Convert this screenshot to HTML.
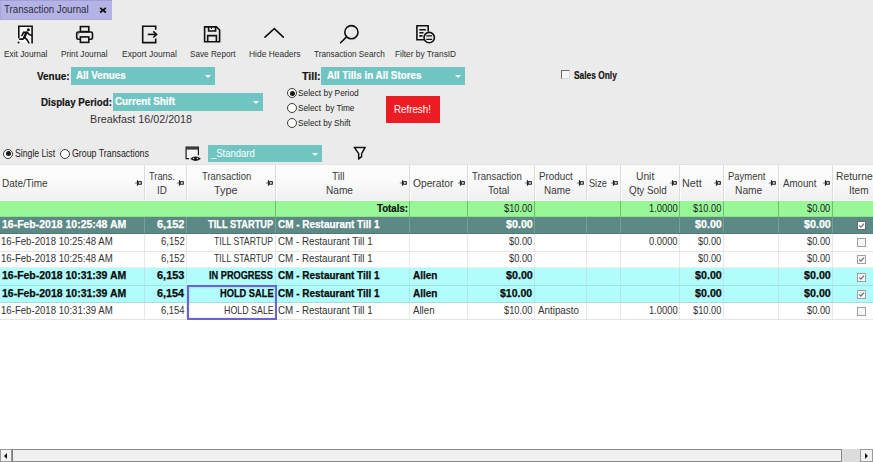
<!DOCTYPE html><html><head><meta charset="utf-8"><title>Transaction Journal</title><style>
*{margin:0;padding:0;box-sizing:border-box}
html,body{width:873px;height:462px;overflow:hidden;background:#ebebeb;font-family:"Liberation Sans",sans-serif}
.a{position:absolute}
.t{position:absolute;white-space:nowrap;transform-origin:0 0}
.dd{position:absolute;background:#70c4c2}
.arr{position:absolute;width:0;height:0;border-left:3px solid transparent;border-right:3px solid transparent;border-top:3px solid #fff}
.radio{position:absolute;width:10px;height:10px;border:1px solid #3c3c3c;border-radius:50%;background:#fafafa}
.radio.on::after{content:"";position:absolute;left:1.5px;top:1.5px;width:5px;height:5px;border-radius:50%;background:#1a1a1a}
.vl{position:absolute;width:1px}
.hl{position:absolute;height:1px;left:0;width:873px}
.cb{position:absolute;width:9px;height:9px;border:1px solid #6e6e6e;background:#fff}
</style></head><body>
<div class="a" style="left:0;top:0;width:112px;height:20px;background:#b5b3e5;border-top:1px solid #a09dd8;border-left:1px solid #a8a6dc"></div>
<div class="a" style="left:0;top:19px;width:112px;height:1px;background:#aba8de"></div>
<div class="t" style="left:4.09px;top:0px;font-size:10.0px;line-height:20px;font-weight:normal;color:#2a2a3c;transform:scaleX(0.9670);">Transaction Journal</div>
<svg class="a" style="left:98px;top:5px" width="10" height="10" viewBox="0 0 10 10"><path d="M2.1 2.9L7.9 7.5M7.9 2.9L2.1 7.5" stroke="#111" stroke-width="1.8"/></svg>
<svg class="a" style="left:14px;top:22px" width="24" height="24" viewBox="14 22 24 24" fill="none" stroke="#111" stroke-width="1.6" stroke-linecap="round">
<rect x="19" y="26.5" width="12.6" height="16" fill="#f6f6f6" stroke="none"/>
<path d="M18.8 37.5V26.2H32.1V43"/><circle cx="28.4" cy="29.8" r="1.5" fill="#111" stroke="none"/>
<path d="M21.9 35.6L23.6 32.4H27.2L29.4 34.6L31.4 35.2"/><path d="M26.4 32.6L24.2 37.4" stroke-width="2.3"/><path d="M24.6 37.3L22.9 39.1H19.6"/><path d="M24.6 37.3L26.9 39.6L28.9 42.9"/><circle cx="18.6" cy="42.5" r="1" fill="#111" stroke="none"/></svg>
<svg class="a" style="left:72px;top:22px" width="24" height="24" viewBox="72 22 24 24" fill="none" stroke="#111" stroke-width="1.6">
<rect x="80.4" y="26.6" width="8.4" height="5"/><path d="M80.4 39.3H78.3A1.6 1.6 0 0 1 76.7 37.7V33.6A1.6 1.6 0 0 1 78.3 32H90.9A1.6 1.6 0 0 1 92.5 33.6V37.7A1.6 1.6 0 0 1 90.9 39.3H88.8"/><rect x="80.4" y="36.9" width="8.4" height="5.5"/><circle cx="78.6" cy="33.6" r="0.6" fill="#555" stroke="none"/></svg>
<svg class="a" style="left:138px;top:22px" width="24" height="24" viewBox="138 22 24 24" fill="none" stroke="#111" stroke-width="1.6">
<path d="M155.7 29.8V26.3H142.7V42.6H155.7V38.6"/><path d="M147.8 34.4H156.6"/><path d="M153.3 31.3L156.6 34.4L153.3 37.5"/></svg>
<svg class="a" style="left:199px;top:22px" width="24" height="24" viewBox="199 22 24 24" fill="none" stroke="#111" stroke-width="1.6">
<path d="M204.6 26.9H216.5L219.6 30V41.8H204.6Z"/><path d="M208.6 26.9V31H215.6V26.9"/><path d="M207.7 41.8V35.6H216.4V41.8"/><path d="M211.5 27.5V29" stroke-width="1"/></svg>
<svg class="a" style="left:261px;top:22px" width="26" height="24" viewBox="261 22 26 24" fill="none" stroke="#111" stroke-width="1.6" stroke-linecap="round">
<path d="M265 37.2L274.3 28.6L283.3 37.2"/></svg>
<svg class="a" style="left:337px;top:22px" width="26" height="24" viewBox="337 22 26 24" fill="none" stroke="#111" stroke-width="1.6" stroke-linecap="round">
<circle cx="351.4" cy="32.2" r="6.6"/><path d="M340.6 42.8L346 37.4"/></svg>
<svg class="a" style="left:412px;top:22px" width="26" height="24" viewBox="412 22 26 24" fill="none" stroke="#111" stroke-width="1.6">
<path d="M424 39.8H416.9V25.8H428.2V31.5"/><path d="M419.3 29.8H425.8M419.3 32.8H423.5M419.3 35.9H422.5"/><circle cx="429.2" cy="37.6" r="5.2" fill="#ebebeb"/><path d="M426.3 35.8H432.1M426.3 39.4H432.1" stroke-width="1.3"/></svg>
<div class="t" style="left:4.12px;top:44px;font-size:8.6px;line-height:20px;font-weight:normal;color:#2e2e2e;transform:scaleX(0.9669);">Exit Journal</div>
<div class="t" style="left:61.22px;top:44px;font-size:8.6px;line-height:20px;font-weight:normal;color:#2e2e2e;transform:scaleX(0.9639);">Print Journal</div>
<div class="t" style="left:121.90px;top:44px;font-size:8.6px;line-height:20px;font-weight:normal;color:#2e2e2e;transform:scaleX(0.9895);">Export Journal</div>
<div class="t" style="left:189.52px;top:44px;font-size:8.6px;line-height:20px;font-weight:normal;color:#2e2e2e;transform:scaleX(0.9524);">Save Report</div>
<div class="t" style="left:248.91px;top:44px;font-size:8.6px;line-height:20px;font-weight:normal;color:#2e2e2e;transform:scaleX(0.9813);">Hide Headers</div>
<div class="t" style="left:314.02px;top:44px;font-size:8.6px;line-height:20px;font-weight:normal;color:#2e2e2e;transform:scaleX(0.9550);">Transaction Search</div>
<div class="t" style="left:395.32px;top:44px;font-size:8.6px;line-height:20px;font-weight:normal;color:#2e2e2e;transform:scaleX(0.9699);">Filter by TransID</div>
<div class="t" style="left:36.83px;top:66px;font-size:10.6px;line-height:20px;font-weight:bold;color:#141414;transform:scaleX(0.9357);-webkit-text-stroke:0.2px currentColor;">Venue:</div>
<div class="dd" style="left:71px;top:67px;width:144px;height:18px"></div>
<div class="t" style="left:76.35px;top:65px;font-size:10.8px;line-height:20px;font-weight:bold;color:#fff;transform:scaleX(0.9109);-webkit-text-stroke:0.2px currentColor;">All Venues</div>
<div class="arr" style="left:205px;top:74.5px"></div>
<div class="t" style="left:302.38px;top:66px;font-size:10.6px;line-height:20px;font-weight:bold;color:#141414;transform:scaleX(0.9994);-webkit-text-stroke:0.2px currentColor;">Till:</div>
<div class="dd" style="left:321px;top:67px;width:144px;height:18px"></div>
<div class="t" style="left:326.75px;top:65px;font-size:10.8px;line-height:20px;font-weight:bold;color:#fff;transform:scaleX(0.9097);-webkit-text-stroke:0.2px currentColor;">All Tills in All Stores</div>
<div class="arr" style="left:455px;top:74.5px"></div>
<div class="a" style="left:561px;top:70px;width:9px;height:9px;background:#f6f6f6;border-top:1px solid #6a6a6a;border-left:1px solid #6a6a6a;border-right:1px solid #dadada;border-bottom:1px solid #dadada"></div>
<div class="t" style="left:574.36px;top:66px;font-size:10.0px;line-height:20px;font-weight:bold;color:#141414;transform:scaleX(0.8366);-webkit-text-stroke:0.2px currentColor;">Sales Only</div>
<div class="t" style="left:41.05px;top:92px;font-size:10.6px;line-height:20px;font-weight:bold;color:#141414;transform:scaleX(0.9199);-webkit-text-stroke:0.2px currentColor;">Display Period:</div>
<div class="dd" style="left:113px;top:93px;width:150px;height:18px"></div>
<div class="t" style="left:115.10px;top:91px;font-size:10.6px;line-height:20px;font-weight:bold;color:#fff;transform:scaleX(0.9266);-webkit-text-stroke:0.2px currentColor;">Current Shift</div>
<div class="arr" style="left:253px;top:100.5px"></div>
<div class="t" style="left:90.32px;top:110px;font-size:10.2px;line-height:20px;font-weight:normal;color:#333;transform:scaleX(1.0533);">Breakfast 16/02/2018</div>
<div class="radio on" style="left:287px;top:88px"></div>
<div class="t" style="left:298.12px;top:83px;font-size:8.5px;line-height:20px;font-weight:normal;color:#222;transform:scaleX(0.9809);">Select by Period</div>
<div class="radio" style="left:287px;top:103px"></div>
<div class="t" style="left:298.12px;top:98px;font-size:8.5px;line-height:20px;font-weight:normal;color:#222;transform:scaleX(0.9714);">Select&nbsp; by Time</div>
<div class="radio" style="left:287px;top:118px"></div>
<div class="t" style="left:298.12px;top:113px;font-size:8.5px;line-height:20px;font-weight:normal;color:#222;transform:scaleX(0.9669);">Select by Shift</div>
<div class="a" style="left:386px;top:96px;width:54px;height:27px;background:#ec1c24"></div>
<div class="t" style="left:394.20px;top:100px;font-size:10.0px;line-height:20px;font-weight:normal;color:#fff;transform:scaleX(0.9762);">Refresh!</div>
<div class="radio on" style="left:3px;top:148.5px"></div>
<div class="t" style="left:14.60px;top:144px;font-size:10.0px;line-height:20px;font-weight:normal;color:#222;transform:scaleX(0.8682);">Single List</div>
<div class="radio" style="left:60px;top:148.5px"></div>
<div class="t" style="left:71.56px;top:144px;font-size:10.0px;line-height:20px;font-weight:normal;color:#222;transform:scaleX(0.8807);">Group Transactions</div>
<svg class="a" style="left:182px;top:142px" width="24" height="24" viewBox="182 142 24 24" fill="none" stroke="#1a1a1a" stroke-width="1.2">
<rect x="186.2" y="147" width="12.2" height="11.6" fill="#f7f7f7" stroke="none"/>
<path d="M189 158.6H186.1V147.1H198.4V155.2"/><rect x="186.1" y="147" width="12.3" height="2.6" fill="#3a3a3a" stroke="none"/>
<path d="M190.8 158.7Q195.5 155.2 200.3 158.7Q195.5 162.2 190.8 158.7Z" fill="#111" stroke="#111" stroke-width="0.9"/><circle cx="193.6" cy="158.5" r="0.75" fill="#ddd" stroke="none"/><circle cx="197.4" cy="158.5" r="0.75" fill="#ddd" stroke="none"/></svg>
<div class="dd" style="left:208px;top:145px;width:114px;height:17px"></div>
<div class="t" style="left:210.54px;top:144px;font-size:10.0px;line-height:20px;font-weight:normal;color:#fff;transform:scaleX(0.9461);">_Standard</div>
<div class="arr" style="left:312px;top:152.5px"></div>
<svg class="a" style="left:348px;top:142px" width="24" height="24" viewBox="348 142 24 24" fill="none" stroke="#111" stroke-width="1.5" stroke-linejoin="round">
<path d="M354.3 147.4H365.2L361.6 153.6V156.6L358.7 159V153.6Z" fill="#f5f5f5"/></svg>
<div class="a" style="left:0;top:164px;width:873px;height:285px;background:#fff"></div>
<div class="a" style="left:0;top:164px;width:873px;height:37px;background:linear-gradient(#fcfcfc,#fbfbfb 40%,#f0f0f0);border-top:1px solid #e2e2e2;border-bottom:1px solid #f7f2f7"></div>
<div class="vl" style="left:144px;top:165px;height:35px;background:#dcdcdc"></div>
<div class="vl" style="left:145px;top:165px;height:35px;background:#fdfdfd"></div>
<div class="vl" style="left:186px;top:165px;height:35px;background:#dcdcdc"></div>
<div class="vl" style="left:187px;top:165px;height:35px;background:#fdfdfd"></div>
<div class="vl" style="left:275px;top:165px;height:35px;background:#dcdcdc"></div>
<div class="vl" style="left:276px;top:165px;height:35px;background:#fdfdfd"></div>
<div class="vl" style="left:409px;top:165px;height:35px;background:#dcdcdc"></div>
<div class="vl" style="left:410px;top:165px;height:35px;background:#fdfdfd"></div>
<div class="vl" style="left:467px;top:165px;height:35px;background:#dcdcdc"></div>
<div class="vl" style="left:468px;top:165px;height:35px;background:#fdfdfd"></div>
<div class="vl" style="left:534px;top:165px;height:35px;background:#dcdcdc"></div>
<div class="vl" style="left:535px;top:165px;height:35px;background:#fdfdfd"></div>
<div class="vl" style="left:586px;top:165px;height:35px;background:#dcdcdc"></div>
<div class="vl" style="left:587px;top:165px;height:35px;background:#fdfdfd"></div>
<div class="vl" style="left:620px;top:165px;height:35px;background:#dcdcdc"></div>
<div class="vl" style="left:621px;top:165px;height:35px;background:#fdfdfd"></div>
<div class="vl" style="left:679px;top:165px;height:35px;background:#dcdcdc"></div>
<div class="vl" style="left:680px;top:165px;height:35px;background:#fdfdfd"></div>
<div class="vl" style="left:723px;top:165px;height:35px;background:#dcdcdc"></div>
<div class="vl" style="left:724px;top:165px;height:35px;background:#fdfdfd"></div>
<div class="vl" style="left:778px;top:165px;height:35px;background:#dcdcdc"></div>
<div class="vl" style="left:779px;top:165px;height:35px;background:#fdfdfd"></div>
<div class="vl" style="left:832px;top:165px;height:35px;background:#dcdcdc"></div>
<div class="vl" style="left:833px;top:165px;height:35px;background:#fdfdfd"></div>
<div class="t" style="left:1.58px;top:174px;font-size:10.4px;line-height:20px;font-weight:normal;color:#3a3a3a;transform:scaleX(0.9596);">Date/Time</div>
<div class="t" style="left:412.52px;top:174px;font-size:10.4px;line-height:20px;font-weight:normal;color:#3a3a3a;transform:scaleX(0.9858);">Operator</div>
<div class="t" style="left:589.18px;top:174px;font-size:10.4px;line-height:20px;font-weight:normal;color:#3a3a3a;transform:scaleX(0.8812);">Size</div>
<div class="t" style="left:682.12px;top:174px;font-size:10.4px;line-height:20px;font-weight:normal;color:#3a3a3a;transform:scaleX(1.0359);">Nett</div>
<div class="t" style="left:782.68px;top:174px;font-size:10.4px;line-height:20px;font-weight:normal;color:#3a3a3a;transform:scaleX(0.9316);">Amount</div>
<div class="t" style="left:148.60px;top:167px;font-size:10.4px;line-height:20px;font-weight:normal;color:#3a3a3a;transform:scaleX(0.8920);">Trans.</div>
<div class="t" style="left:157.30px;top:181px;font-size:10.4px;line-height:20px;font-weight:normal;color:#3a3a3a;transform:scaleX(0.9392);">ID</div>
<div class="t" style="left:201.99px;top:167px;font-size:10.4px;line-height:20px;font-weight:normal;color:#3a3a3a;transform:scaleX(0.9125);">Transaction</div>
<div class="t" style="left:214.26px;top:181px;font-size:10.4px;line-height:20px;font-weight:normal;color:#3a3a3a;transform:scaleX(1.0521);">Type</div>
<div class="t" style="left:331.98px;top:167px;font-size:10.4px;line-height:20px;font-weight:normal;color:#3a3a3a;transform:scaleX(0.9691);">Till</div>
<div class="t" style="left:326.07px;top:181px;font-size:10.4px;line-height:20px;font-weight:normal;color:#3a3a3a;transform:scaleX(0.9725);">Name</div>
<div class="t" style="left:472.49px;top:167px;font-size:10.4px;line-height:20px;font-weight:normal;color:#3a3a3a;transform:scaleX(0.9238);">Transaction</div>
<div class="t" style="left:487.78px;top:181px;font-size:10.4px;line-height:20px;font-weight:normal;color:#3a3a3a;transform:scaleX(0.9696);">Total</div>
<div class="t" style="left:539.19px;top:167px;font-size:10.4px;line-height:20px;font-weight:normal;color:#3a3a3a;transform:scaleX(0.9452);">Product</div>
<div class="t" style="left:544.18px;top:181px;font-size:10.4px;line-height:20px;font-weight:normal;color:#3a3a3a;transform:scaleX(0.9574);">Name</div>
<div class="t" style="left:636.41px;top:167px;font-size:10.4px;line-height:20px;font-weight:normal;color:#3a3a3a;transform:scaleX(0.9871);">Unit</div>
<div class="t" style="left:628.54px;top:181px;font-size:10.4px;line-height:20px;font-weight:normal;color:#3a3a3a;transform:scaleX(0.9450);">Qty Sold</div>
<div class="t" style="left:727.92px;top:167px;font-size:10.4px;line-height:20px;font-weight:normal;color:#3a3a3a;transform:scaleX(0.9099);">Payment</div>
<div class="t" style="left:734.96px;top:181px;font-size:10.4px;line-height:20px;font-weight:normal;color:#3a3a3a;transform:scaleX(0.9839);">Name</div>
<div class="t" style="left:836.25px;top:167px;font-size:10.4px;line-height:20px;font-weight:normal;color:#3a3a3a;transform:scaleX(0.9911);">Returned</div>
<div class="t" style="left:848.67px;top:181px;font-size:10.4px;line-height:20px;font-weight:normal;color:#3a3a3a;transform:scaleX(0.9739);">Item</div>
<svg class="a" style="left:134px;top:174px" width="10" height="14" viewBox="0 0 10 14"><path d="M0.8 9H3" stroke="#8a8a8a" stroke-width="1.1"/><path d="M3.4 6.2V11.7" stroke="#111" stroke-width="1"/><rect x="4.2" y="7.7" width="3.1" height="2.5" fill="#fff" stroke="#111" stroke-width="1"/></svg>
<svg class="a" style="left:176px;top:174px" width="10" height="14" viewBox="0 0 10 14"><path d="M0.8 9H3" stroke="#8a8a8a" stroke-width="1.1"/><path d="M3.4 6.2V11.7" stroke="#111" stroke-width="1"/><rect x="4.2" y="7.7" width="3.1" height="2.5" fill="#fff" stroke="#111" stroke-width="1"/></svg>
<svg class="a" style="left:265px;top:174px" width="10" height="14" viewBox="0 0 10 14"><path d="M0.8 9H3" stroke="#8a8a8a" stroke-width="1.1"/><path d="M3.4 6.2V11.7" stroke="#111" stroke-width="1"/><rect x="4.2" y="7.7" width="3.1" height="2.5" fill="#fff" stroke="#111" stroke-width="1"/></svg>
<svg class="a" style="left:399px;top:174px" width="10" height="14" viewBox="0 0 10 14"><path d="M0.8 9H3" stroke="#8a8a8a" stroke-width="1.1"/><path d="M3.4 6.2V11.7" stroke="#111" stroke-width="1"/><rect x="4.2" y="7.7" width="3.1" height="2.5" fill="#fff" stroke="#111" stroke-width="1"/></svg>
<svg class="a" style="left:457px;top:174px" width="10" height="14" viewBox="0 0 10 14"><path d="M0.8 9H3" stroke="#8a8a8a" stroke-width="1.1"/><path d="M3.4 6.2V11.7" stroke="#111" stroke-width="1"/><rect x="4.2" y="7.7" width="3.1" height="2.5" fill="#fff" stroke="#111" stroke-width="1"/></svg>
<svg class="a" style="left:524px;top:174px" width="10" height="14" viewBox="0 0 10 14"><path d="M0.8 9H3" stroke="#8a8a8a" stroke-width="1.1"/><path d="M3.4 6.2V11.7" stroke="#111" stroke-width="1"/><rect x="4.2" y="7.7" width="3.1" height="2.5" fill="#fff" stroke="#111" stroke-width="1"/></svg>
<svg class="a" style="left:576px;top:174px" width="10" height="14" viewBox="0 0 10 14"><path d="M0.8 9H3" stroke="#8a8a8a" stroke-width="1.1"/><path d="M3.4 6.2V11.7" stroke="#111" stroke-width="1"/><rect x="4.2" y="7.7" width="3.1" height="2.5" fill="#fff" stroke="#111" stroke-width="1"/></svg>
<svg class="a" style="left:610px;top:174px" width="10" height="14" viewBox="0 0 10 14"><path d="M0.8 9H3" stroke="#8a8a8a" stroke-width="1.1"/><path d="M3.4 6.2V11.7" stroke="#111" stroke-width="1"/><rect x="4.2" y="7.7" width="3.1" height="2.5" fill="#fff" stroke="#111" stroke-width="1"/></svg>
<svg class="a" style="left:669px;top:174px" width="10" height="14" viewBox="0 0 10 14"><path d="M0.8 9H3" stroke="#8a8a8a" stroke-width="1.1"/><path d="M3.4 6.2V11.7" stroke="#111" stroke-width="1"/><rect x="4.2" y="7.7" width="3.1" height="2.5" fill="#fff" stroke="#111" stroke-width="1"/></svg>
<svg class="a" style="left:713px;top:174px" width="10" height="14" viewBox="0 0 10 14"><path d="M0.8 9H3" stroke="#8a8a8a" stroke-width="1.1"/><path d="M3.4 6.2V11.7" stroke="#111" stroke-width="1"/><rect x="4.2" y="7.7" width="3.1" height="2.5" fill="#fff" stroke="#111" stroke-width="1"/></svg>
<svg class="a" style="left:768px;top:174px" width="10" height="14" viewBox="0 0 10 14"><path d="M0.8 9H3" stroke="#8a8a8a" stroke-width="1.1"/><path d="M3.4 6.2V11.7" stroke="#111" stroke-width="1"/><rect x="4.2" y="7.7" width="3.1" height="2.5" fill="#fff" stroke="#111" stroke-width="1"/></svg>
<svg class="a" style="left:822px;top:174px" width="10" height="14" viewBox="0 0 10 14"><path d="M0.8 9H3" stroke="#8a8a8a" stroke-width="1.1"/><path d="M3.4 6.2V11.7" stroke="#111" stroke-width="1"/><rect x="4.2" y="7.7" width="3.1" height="2.5" fill="#fff" stroke="#111" stroke-width="1"/></svg>
<div class="a" style="left:0;top:201px;width:873px;height:16px;background:#98f898"></div>
<div class="a" style="left:0;top:216px;width:873px;height:1px;background:#8fe08f"></div>
<div class="vl" style="left:275px;top:201px;height:16px;background:#6fbf6f"></div>
<div class="vl" style="left:409px;top:201px;height:16px;background:#6fbf6f"></div>
<div class="vl" style="left:467px;top:201px;height:16px;background:#6fbf6f"></div>
<div class="vl" style="left:534px;top:201px;height:16px;background:#6fbf6f"></div>
<div class="vl" style="left:620px;top:201px;height:16px;background:#6fbf6f"></div>
<div class="vl" style="left:679px;top:201px;height:16px;background:#6fbf6f"></div>
<div class="vl" style="left:723px;top:201px;height:16px;background:#6fbf6f"></div>
<div class="vl" style="left:778px;top:201px;height:16px;background:#6fbf6f"></div>
<div class="vl" style="left:832px;top:201px;height:16px;background:#6fbf6f"></div>
<div class="t" style="left:376.89px;top:198px;font-size:10.5px;line-height:20px;font-weight:bold;color:#111;transform:scaleX(0.9226);-webkit-text-stroke:0.2px currentColor;">Totals:</div>
<div class="t" style="left:504.10px;top:198px;font-size:10.5px;line-height:20px;font-weight:normal;color:#222;transform:scaleX(0.8802);">$10.00</div>
<div class="t" style="left:648.58px;top:198px;font-size:10.5px;line-height:20px;font-weight:normal;color:#222;transform:scaleX(0.8964);">1.0000</div>
<div class="t" style="left:693.10px;top:198px;font-size:10.5px;line-height:20px;font-weight:normal;color:#222;transform:scaleX(0.8802);">$10.00</div>
<div class="t" style="left:807.10px;top:198px;font-size:10.5px;line-height:20px;font-weight:normal;color:#222;transform:scaleX(0.8856);">$0.00</div>
<div class="a" style="left:0;top:217px;width:873px;height:17px;background:#5c8986"></div>
<div class="vl" style="left:144px;top:217px;height:17px;background:#779f9c"></div>
<div class="vl" style="left:186px;top:217px;height:17px;background:#779f9c"></div>
<div class="vl" style="left:275px;top:217px;height:17px;background:#779f9c"></div>
<div class="vl" style="left:409px;top:217px;height:17px;background:#779f9c"></div>
<div class="vl" style="left:467px;top:217px;height:17px;background:#779f9c"></div>
<div class="vl" style="left:534px;top:217px;height:17px;background:#779f9c"></div>
<div class="vl" style="left:586px;top:217px;height:17px;background:#779f9c"></div>
<div class="vl" style="left:620px;top:217px;height:17px;background:#779f9c"></div>
<div class="vl" style="left:679px;top:217px;height:17px;background:#779f9c"></div>
<div class="vl" style="left:723px;top:217px;height:17px;background:#779f9c"></div>
<div class="vl" style="left:778px;top:217px;height:17px;background:#779f9c"></div>
<div class="vl" style="left:832px;top:217px;height:17px;background:#779f9c"></div>
<div class="t" style="left:1.54px;top:214px;font-size:10.5px;line-height:20px;font-weight:bold;color:#fff;transform:scaleX(0.9980);-webkit-text-stroke:0.25px currentColor;">16-Feb-2018 10:25:48 AM</div>
<div class="t" style="left:156.99px;top:214px;font-size:10.5px;line-height:20px;font-weight:bold;color:#fff;transform:scaleX(1.0447);-webkit-text-stroke:0.25px currentColor;">6,152</div>
<div class="t" style="left:208.10px;top:214px;font-size:10.5px;line-height:20px;font-weight:bold;color:#fff;transform:scaleX(0.8850);-webkit-text-stroke:0.25px currentColor;">TILL STARTUP</div>
<div class="t" style="left:278.39px;top:214px;font-size:10.5px;line-height:20px;font-weight:bold;color:#fff;transform:scaleX(0.9481);-webkit-text-stroke:0.25px currentColor;">CM - Restaurant Till 1</div>
<div class="t" style="left:505.66px;top:214px;font-size:10.5px;line-height:20px;font-weight:bold;color:#fff;transform:scaleX(1.0193);-webkit-text-stroke:0.25px currentColor;">$0.00</div>
<div class="t" style="left:694.66px;top:214px;font-size:10.5px;line-height:20px;font-weight:bold;color:#fff;transform:scaleX(1.0193);-webkit-text-stroke:0.25px currentColor;">$0.00</div>
<div class="t" style="left:803.66px;top:214px;font-size:10.5px;line-height:20px;font-weight:bold;color:#fff;transform:scaleX(1.0193);-webkit-text-stroke:0.25px currentColor;">$0.00</div>
<div class="cb" style="left:857px;top:221px;border-color:#6a6a6a;background:#fff"><svg width="7" height="7" viewBox="0 0 7 7" style="position:absolute;left:0;top:0"><path d="M1.2 3.4L2.9 5.1L6 1.6" fill="none" stroke="#707070" stroke-width="1.3"/></svg></div>
<div class="a" style="left:0;top:234px;width:873px;height:17px;background:#ffffff"></div>
<div class="vl" style="left:144px;top:234px;height:17px;background:#e8e8e8"></div>
<div class="vl" style="left:186px;top:234px;height:17px;background:#e8e8e8"></div>
<div class="vl" style="left:275px;top:234px;height:17px;background:#e8e8e8"></div>
<div class="vl" style="left:409px;top:234px;height:17px;background:#e8e8e8"></div>
<div class="vl" style="left:467px;top:234px;height:17px;background:#e8e8e8"></div>
<div class="vl" style="left:534px;top:234px;height:17px;background:#e8e8e8"></div>
<div class="vl" style="left:586px;top:234px;height:17px;background:#e8e8e8"></div>
<div class="vl" style="left:620px;top:234px;height:17px;background:#e8e8e8"></div>
<div class="vl" style="left:679px;top:234px;height:17px;background:#e8e8e8"></div>
<div class="vl" style="left:723px;top:234px;height:17px;background:#e8e8e8"></div>
<div class="vl" style="left:778px;top:234px;height:17px;background:#e8e8e8"></div>
<div class="vl" style="left:832px;top:234px;height:17px;background:#e8e8e8"></div>
<div class="t" style="left:1.47px;top:231px;font-size:10.5px;line-height:20px;font-weight:normal;color:#333;transform:scaleX(0.9157);">16-Feb-2018 10:25:48 AM</div>
<div class="t" style="left:160.72px;top:231px;font-size:10.5px;line-height:20px;font-weight:normal;color:#333;transform:scaleX(0.9044);">6,152</div>
<div class="t" style="left:214.41px;top:231px;font-size:10.5px;line-height:20px;font-weight:normal;color:#333;transform:scaleX(0.8251);">TILL STARTUP</div>
<div class="t" style="left:278.30px;top:231px;font-size:10.5px;line-height:20px;font-weight:normal;color:#333;transform:scaleX(0.9316);">CM - Restaurant Till 1</div>
<div class="t" style="left:509.10px;top:231px;font-size:10.5px;line-height:20px;font-weight:normal;color:#333;transform:scaleX(0.8856);">$0.00</div>
<div class="t" style="left:648.84px;top:231px;font-size:10.5px;line-height:20px;font-weight:normal;color:#333;transform:scaleX(0.8885);">0.0000</div>
<div class="t" style="left:698.10px;top:231px;font-size:10.5px;line-height:20px;font-weight:normal;color:#333;transform:scaleX(0.8856);">$0.00</div>
<div class="t" style="left:807.10px;top:231px;font-size:10.5px;line-height:20px;font-weight:normal;color:#333;transform:scaleX(0.8856);">$0.00</div>
<div class="cb" style="left:857px;top:238px;border-color:#a0a0a0;background:#f7f7f7"></div>
<div class="a" style="left:0;top:251px;width:873px;height:17px;background:#ffffff"></div>
<div class="vl" style="left:144px;top:251px;height:17px;background:#e8e8e8"></div>
<div class="vl" style="left:186px;top:251px;height:17px;background:#e8e8e8"></div>
<div class="vl" style="left:275px;top:251px;height:17px;background:#e8e8e8"></div>
<div class="vl" style="left:409px;top:251px;height:17px;background:#e8e8e8"></div>
<div class="vl" style="left:467px;top:251px;height:17px;background:#e8e8e8"></div>
<div class="vl" style="left:534px;top:251px;height:17px;background:#e8e8e8"></div>
<div class="vl" style="left:586px;top:251px;height:17px;background:#e8e8e8"></div>
<div class="vl" style="left:620px;top:251px;height:17px;background:#e8e8e8"></div>
<div class="vl" style="left:679px;top:251px;height:17px;background:#e8e8e8"></div>
<div class="vl" style="left:723px;top:251px;height:17px;background:#e8e8e8"></div>
<div class="vl" style="left:778px;top:251px;height:17px;background:#e8e8e8"></div>
<div class="vl" style="left:832px;top:251px;height:17px;background:#e8e8e8"></div>
<div class="t" style="left:1.47px;top:248px;font-size:10.5px;line-height:20px;font-weight:normal;color:#333;transform:scaleX(0.9157);">16-Feb-2018 10:25:48 AM</div>
<div class="t" style="left:160.72px;top:248px;font-size:10.5px;line-height:20px;font-weight:normal;color:#333;transform:scaleX(0.9044);">6,152</div>
<div class="t" style="left:214.41px;top:248px;font-size:10.5px;line-height:20px;font-weight:normal;color:#333;transform:scaleX(0.8251);">TILL STARTUP</div>
<div class="t" style="left:278.30px;top:248px;font-size:10.5px;line-height:20px;font-weight:normal;color:#333;transform:scaleX(0.9316);">CM - Restaurant Till 1</div>
<div class="t" style="left:509.10px;top:248px;font-size:10.5px;line-height:20px;font-weight:normal;color:#333;transform:scaleX(0.8856);">$0.00</div>
<div class="t" style="left:698.10px;top:248px;font-size:10.5px;line-height:20px;font-weight:normal;color:#333;transform:scaleX(0.8856);">$0.00</div>
<div class="t" style="left:807.10px;top:248px;font-size:10.5px;line-height:20px;font-weight:normal;color:#333;transform:scaleX(0.8856);">$0.00</div>
<div class="cb" style="left:857px;top:255px;border-color:#a0a0a0;background:#f7f7f7"><svg width="7" height="7" viewBox="0 0 7 7" style="position:absolute;left:0;top:0"><path d="M1.2 3.4L2.9 5.1L6 1.6" fill="none" stroke="#707070" stroke-width="1.3"/></svg></div>
<div class="a" style="left:0;top:268px;width:873px;height:17px;background:#b1fcfc"></div>
<div class="vl" style="left:144px;top:268px;height:17px;background:#b4e6e6"></div>
<div class="vl" style="left:186px;top:268px;height:17px;background:#b4e6e6"></div>
<div class="vl" style="left:275px;top:268px;height:17px;background:#b4e6e6"></div>
<div class="vl" style="left:409px;top:268px;height:17px;background:#b4e6e6"></div>
<div class="vl" style="left:467px;top:268px;height:17px;background:#b4e6e6"></div>
<div class="vl" style="left:534px;top:268px;height:17px;background:#b4e6e6"></div>
<div class="vl" style="left:586px;top:268px;height:17px;background:#b4e6e6"></div>
<div class="vl" style="left:620px;top:268px;height:17px;background:#b4e6e6"></div>
<div class="vl" style="left:679px;top:268px;height:17px;background:#b4e6e6"></div>
<div class="vl" style="left:723px;top:268px;height:17px;background:#b4e6e6"></div>
<div class="vl" style="left:778px;top:268px;height:17px;background:#b4e6e6"></div>
<div class="vl" style="left:832px;top:268px;height:17px;background:#b4e6e6"></div>
<div class="t" style="left:1.54px;top:265px;font-size:10.5px;line-height:20px;font-weight:bold;color:#0a0a0a;transform:scaleX(0.9980);-webkit-text-stroke:0.25px currentColor;">16-Feb-2018 10:31:39 AM</div>
<div class="t" style="left:156.99px;top:265px;font-size:10.5px;line-height:20px;font-weight:bold;color:#0a0a0a;transform:scaleX(1.0430);-webkit-text-stroke:0.25px currentColor;">6,153</div>
<div class="t" style="left:209.48px;top:265px;font-size:10.5px;line-height:20px;font-weight:bold;color:#0a0a0a;transform:scaleX(0.8758);-webkit-text-stroke:0.25px currentColor;">IN PROGRESS</div>
<div class="t" style="left:278.39px;top:265px;font-size:10.5px;line-height:20px;font-weight:bold;color:#0a0a0a;transform:scaleX(0.9481);-webkit-text-stroke:0.25px currentColor;">CM - Restaurant Till 1</div>
<div class="t" style="left:412.55px;top:265px;font-size:10.5px;line-height:20px;font-weight:bold;color:#0a0a0a;transform:scaleX(0.9532);-webkit-text-stroke:0.25px currentColor;">Allen</div>
<div class="t" style="left:505.66px;top:265px;font-size:10.5px;line-height:20px;font-weight:bold;color:#0a0a0a;transform:scaleX(1.0193);-webkit-text-stroke:0.25px currentColor;">$0.00</div>
<div class="t" style="left:694.66px;top:265px;font-size:10.5px;line-height:20px;font-weight:bold;color:#0a0a0a;transform:scaleX(1.0193);-webkit-text-stroke:0.25px currentColor;">$0.00</div>
<div class="t" style="left:803.66px;top:265px;font-size:10.5px;line-height:20px;font-weight:bold;color:#0a0a0a;transform:scaleX(1.0193);-webkit-text-stroke:0.25px currentColor;">$0.00</div>
<div class="cb" style="left:857px;top:273px;border-color:#a0a0a0;background:#f7f7f7"><svg width="7" height="7" viewBox="0 0 7 7" style="position:absolute;left:0;top:0"><path d="M1.2 3.4L2.9 5.1L6 1.6" fill="none" stroke="#707070" stroke-width="1.3"/></svg></div>
<div class="a" style="left:0;top:285px;width:873px;height:17px;background:#b1fcfc"></div>
<div class="vl" style="left:144px;top:285px;height:17px;background:#b4e6e6"></div>
<div class="vl" style="left:186px;top:285px;height:17px;background:#b4e6e6"></div>
<div class="vl" style="left:275px;top:285px;height:17px;background:#b4e6e6"></div>
<div class="vl" style="left:409px;top:285px;height:17px;background:#b4e6e6"></div>
<div class="vl" style="left:467px;top:285px;height:17px;background:#b4e6e6"></div>
<div class="vl" style="left:534px;top:285px;height:17px;background:#b4e6e6"></div>
<div class="vl" style="left:586px;top:285px;height:17px;background:#b4e6e6"></div>
<div class="vl" style="left:620px;top:285px;height:17px;background:#b4e6e6"></div>
<div class="vl" style="left:679px;top:285px;height:17px;background:#b4e6e6"></div>
<div class="vl" style="left:723px;top:285px;height:17px;background:#b4e6e6"></div>
<div class="vl" style="left:778px;top:285px;height:17px;background:#b4e6e6"></div>
<div class="vl" style="left:832px;top:285px;height:17px;background:#b4e6e6"></div>
<div class="t" style="left:1.54px;top:283px;font-size:10.5px;line-height:20px;font-weight:bold;color:#0a0a0a;transform:scaleX(0.9980);-webkit-text-stroke:0.25px currentColor;">16-Feb-2018 10:31:39 AM</div>
<div class="t" style="left:157.00px;top:283px;font-size:10.5px;line-height:20px;font-weight:bold;color:#0a0a0a;transform:scaleX(1.0298);-webkit-text-stroke:0.25px currentColor;">6,154</div>
<div class="t" style="left:219.78px;top:283px;font-size:10.5px;line-height:20px;font-weight:bold;color:#0a0a0a;transform:scaleX(0.8832);-webkit-text-stroke:0.25px currentColor;">HOLD SALE</div>
<div class="t" style="left:278.39px;top:283px;font-size:10.5px;line-height:20px;font-weight:bold;color:#0a0a0a;transform:scaleX(0.9481);-webkit-text-stroke:0.25px currentColor;">CM - Restaurant Till 1</div>
<div class="t" style="left:412.55px;top:283px;font-size:10.5px;line-height:20px;font-weight:bold;color:#0a0a0a;transform:scaleX(0.9532);-webkit-text-stroke:0.25px currentColor;">Allen</div>
<div class="t" style="left:500.26px;top:283px;font-size:10.5px;line-height:20px;font-weight:bold;color:#0a0a0a;transform:scaleX(1.0018);-webkit-text-stroke:0.25px currentColor;">$10.00</div>
<div class="t" style="left:694.66px;top:283px;font-size:10.5px;line-height:20px;font-weight:bold;color:#0a0a0a;transform:scaleX(1.0193);-webkit-text-stroke:0.25px currentColor;">$0.00</div>
<div class="t" style="left:803.66px;top:283px;font-size:10.5px;line-height:20px;font-weight:bold;color:#0a0a0a;transform:scaleX(1.0193);-webkit-text-stroke:0.25px currentColor;">$0.00</div>
<div class="cb" style="left:857px;top:290px;border-color:#a0a0a0;background:#f7f7f7"><svg width="7" height="7" viewBox="0 0 7 7" style="position:absolute;left:0;top:0"><path d="M1.2 3.4L2.9 5.1L6 1.6" fill="none" stroke="#707070" stroke-width="1.3"/></svg></div>
<div class="a" style="left:0;top:302px;width:873px;height:17px;background:#ffffff"></div>
<div class="vl" style="left:144px;top:302px;height:17px;background:#e8e8e8"></div>
<div class="vl" style="left:186px;top:302px;height:17px;background:#e8e8e8"></div>
<div class="vl" style="left:275px;top:302px;height:17px;background:#e8e8e8"></div>
<div class="vl" style="left:409px;top:302px;height:17px;background:#e8e8e8"></div>
<div class="vl" style="left:467px;top:302px;height:17px;background:#e8e8e8"></div>
<div class="vl" style="left:534px;top:302px;height:17px;background:#e8e8e8"></div>
<div class="vl" style="left:586px;top:302px;height:17px;background:#e8e8e8"></div>
<div class="vl" style="left:620px;top:302px;height:17px;background:#e8e8e8"></div>
<div class="vl" style="left:679px;top:302px;height:17px;background:#e8e8e8"></div>
<div class="vl" style="left:723px;top:302px;height:17px;background:#e8e8e8"></div>
<div class="vl" style="left:778px;top:302px;height:17px;background:#e8e8e8"></div>
<div class="vl" style="left:832px;top:302px;height:17px;background:#e8e8e8"></div>
<div class="t" style="left:1.47px;top:300px;font-size:10.5px;line-height:20px;font-weight:normal;color:#333;transform:scaleX(0.9157);">16-Feb-2018 10:31:39 AM</div>
<div class="t" style="left:160.72px;top:300px;font-size:10.5px;line-height:20px;font-weight:normal;color:#333;transform:scaleX(0.8965);">6,154</div>
<div class="t" style="left:223.67px;top:300px;font-size:10.5px;line-height:20px;font-weight:normal;color:#333;transform:scaleX(0.8434);">HOLD SALE</div>
<div class="t" style="left:278.30px;top:300px;font-size:10.5px;line-height:20px;font-weight:normal;color:#333;transform:scaleX(0.9316);">CM - Restaurant Till 1</div>
<div class="t" style="left:412.78px;top:300px;font-size:10.5px;line-height:20px;font-weight:normal;color:#333;transform:scaleX(0.9228);">Allen</div>
<div class="t" style="left:504.10px;top:300px;font-size:10.5px;line-height:20px;font-weight:normal;color:#333;transform:scaleX(0.8802);">$10.00</div>
<div class="t" style="left:537.78px;top:300px;font-size:10.5px;line-height:20px;font-weight:normal;color:#333;transform:scaleX(0.9328);">Antipasto</div>
<div class="t" style="left:648.58px;top:300px;font-size:10.5px;line-height:20px;font-weight:normal;color:#333;transform:scaleX(0.8964);">1.0000</div>
<div class="t" style="left:693.10px;top:300px;font-size:10.5px;line-height:20px;font-weight:normal;color:#333;transform:scaleX(0.8802);">$10.00</div>
<div class="t" style="left:807.10px;top:300px;font-size:10.5px;line-height:20px;font-weight:normal;color:#333;transform:scaleX(0.8856);">$0.00</div>
<div class="cb" style="left:857px;top:307px;border-color:#a0a0a0;background:#f7f7f7"></div>
<div class="hl" style="top:233px;background:#4e7b78"></div>
<div class="hl" style="top:251px;background:#e4e4e4"></div>
<div class="hl" style="top:267px;background:#ededed"></div>
<div class="hl" style="top:285px;background:#9fe0e0"></div>
<div class="hl" style="top:302px;background:#a6dede"></div>
<div class="hl" style="top:319px;background:#e4e4e4"></div>
<div class="a" style="left:187px;top:285px;width:90px;height:35px;border:2px solid #6c63d2;box-shadow:inset 1px 1px 2px rgba(0,0,0,0.07),inset -1px -1px 2px rgba(0,0,0,0.07)"></div>
<div class="a" style="left:0;top:449px;width:873px;height:13px;background:#dcdcdc"></div>
<div class="a" style="left:0;top:449px;width:12px;height:13px;background:#f2f2f2;border:1px solid #9a9a9a"></div>
<div class="a" style="left:4px;top:452.5px;width:0;height:0;border-top:3px solid transparent;border-bottom:3px solid transparent;border-right:3px solid #111"></div>
<div class="a" style="left:12px;top:449px;width:830px;height:13px;background:#f0f0f0;border:1px solid #8a8a8a;border-left:1px solid #777"></div>
<div class="a" style="left:860px;top:449px;width:13px;height:13px;background:#f2f2f2;border:1px solid #9a9a9a"></div>
<div class="a" style="left:865px;top:452.5px;width:0;height:0;border-top:3px solid transparent;border-bottom:3px solid transparent;border-left:3px solid #111"></div>
</body></html>
